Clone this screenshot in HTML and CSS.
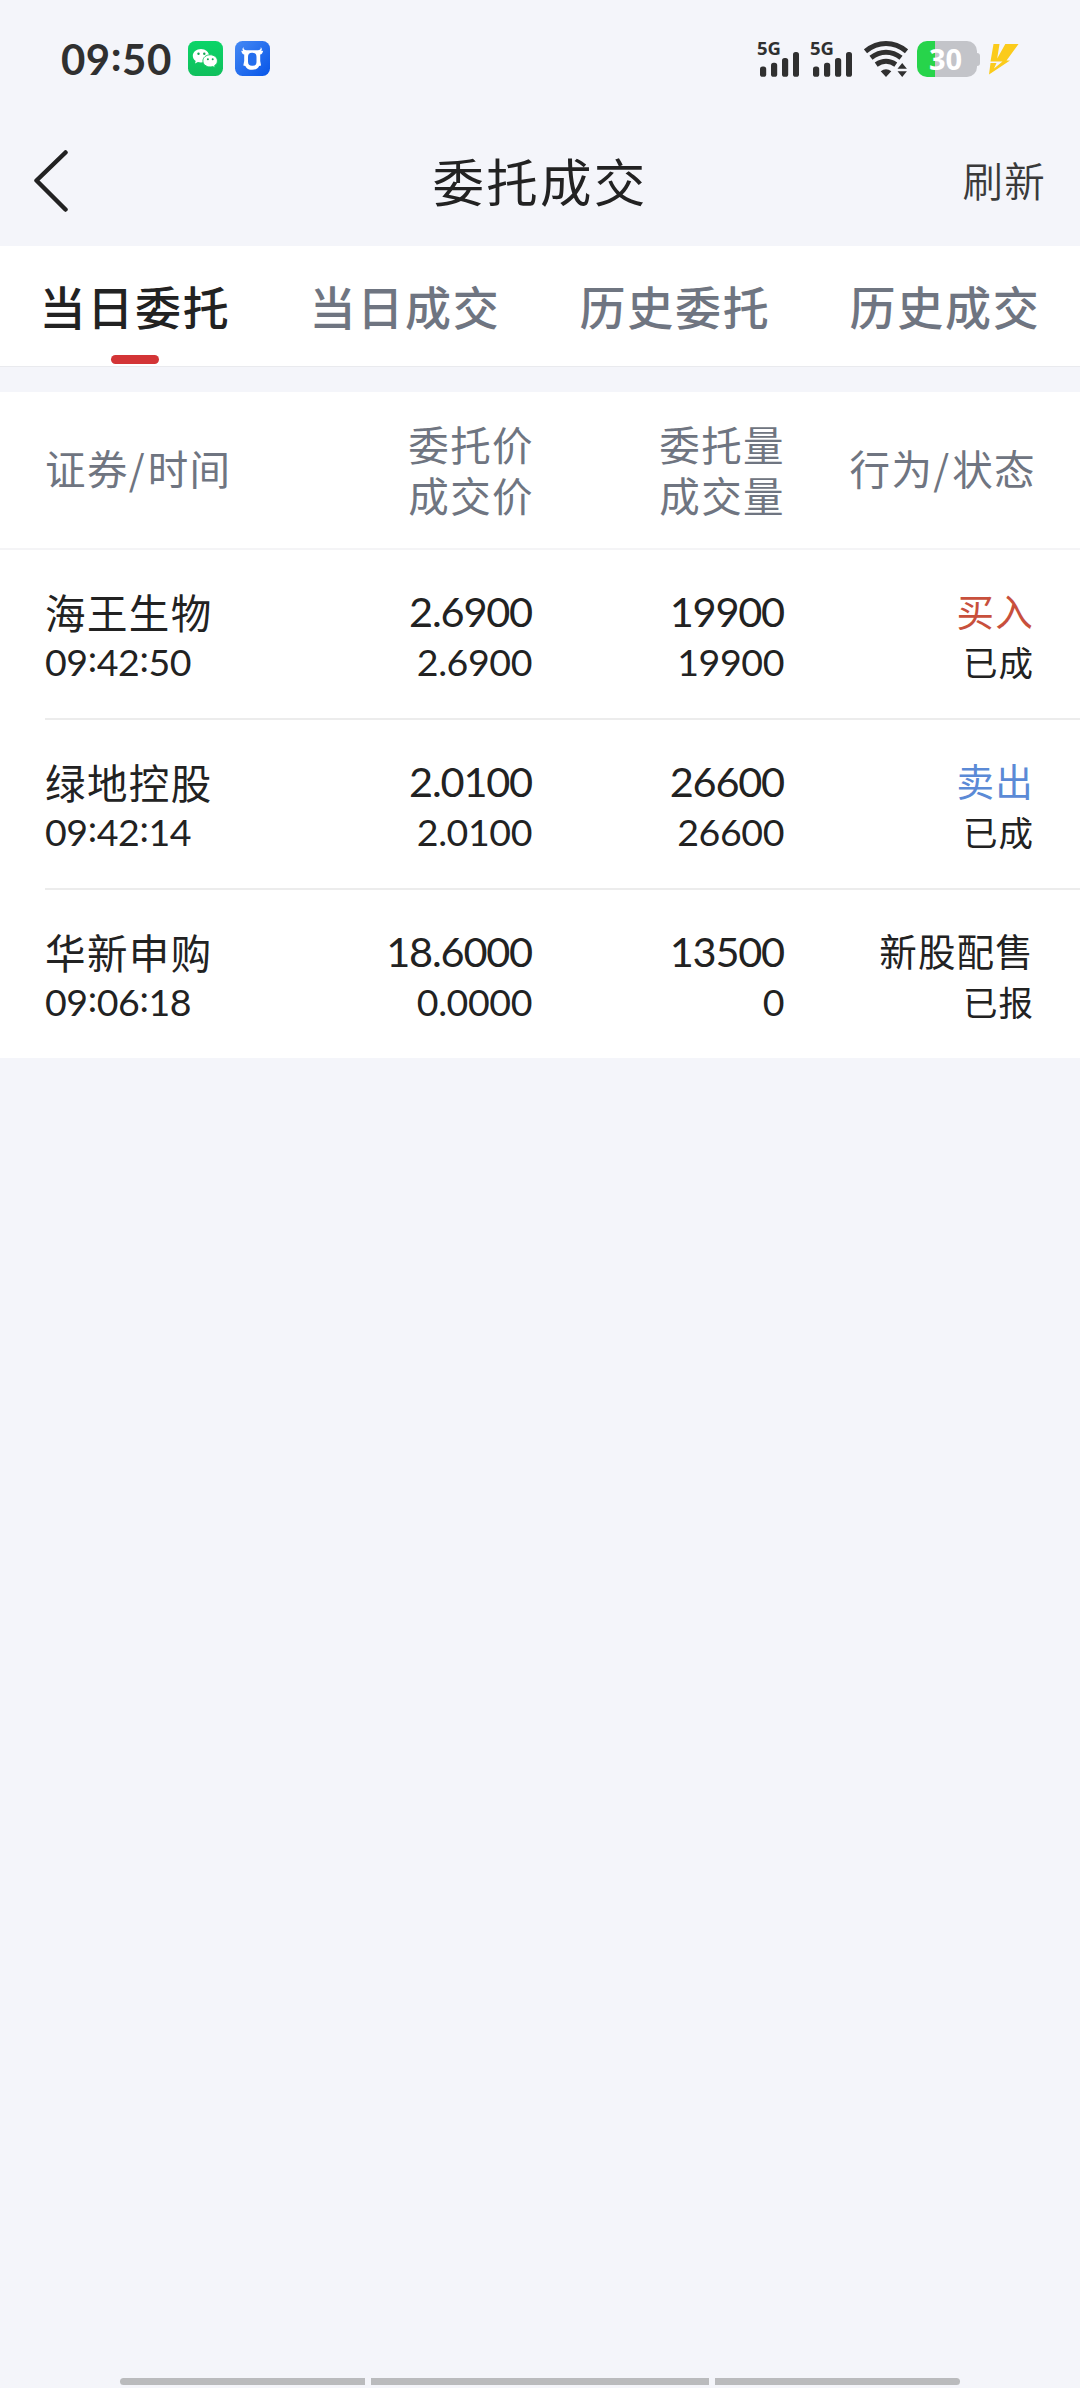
FILE: index.html
```html
<!DOCTYPE html>
<html lang="zh-CN">
<head>
<meta charset="utf-8">
<title>委托成交</title>
<link rel="stylesheet" href="styles.css">
</head>
<body>
<div class="screen">
  <div class="status">
    <div class="status-left">
      <span class="clock">09<span class="clock-colon">:</span>50</span>
      <svg class="app" viewBox="0 0 35 35">
        <defs><linearGradient id="g" x1="0" y1="0" x2="0" y2="1"><stop offset="0" stop-color="#0bd568"/><stop offset="1" stop-color="#10bf5c"/></linearGradient></defs>
        <rect width="35" height="35" rx="7.5" fill="url(#g)"/>
        <path d="M13 8c-4.600 0-8.200 3-8.200 6.800 0 2.100 1.100 3.900 2.900 5.200l-.7 2.400 2.900-1.400c1 .3 2 .5 3.100.5 4.500 0 8.100-3 8.100-6.700S17.500 8 13 8z" fill="#fff"/>
        <path d="M22.200 13.800c-4.100 0-7.300 2.700-7.300 6.100s3.200 6 7.300 6c.8 0 1.700-.1 2.500-.4l2.500 1.300-.6-2.200c1.700-1.100 2.800-2.800 2.800-4.700 0-3.400-3.200-6.100-7.200-6.100z" fill="#fff" stroke="#0ec860" stroke-width=".9"/>
        <g fill="#11a653"><circle cx="10.500" cy="12.700" r="1.200"/><circle cx="16.300" cy="12.700" r="1.200"/><circle cx="19.900" cy="18.200" r="1"/><circle cx="24.700" cy="18.200" r="1"/></g>
      </svg>
      <svg class="app" viewBox="0 0 35 35">
        <defs><linearGradient id="b" x1="0" y1="0" x2="1" y2="1"><stop offset="0" stop-color="#4589f4"/><stop offset="1" stop-color="#0755e8"/></linearGradient></defs>
        <rect width="35" height="35" rx="7.500" fill="url(#b)"/>
        <path d="M8.500 6c-.2 2.400.8 3.300 3 3.300h11.300c2.200 0 3.200-.9 3-3.300 1.300 1.400 1.300 2.800.5 4l1.900-.3c-.6 2.400-1.500 3.600-3 3.900V20l.9 4.500-2 .4c-1.200 2.600-3.500 3.900-6.900 3.900s-5.700-1.300-6.900-3.900l-2-.4.900-4.500v-6.400c-1.500-.3-2.400-1.500-3-3.900L8 10c-.8-1.200-.8-2.600.5-4z" fill="#fff"/>
        <rect x="13" y="11.800" width="8.500" height="13" rx="4" fill="#246eed"/>
      </svg>
    </div>
    <div class="status-right">
      <div class="signal">
        <span class="net">5G</span>
        <svg width="41" height="26" viewBox="0 0 41 26" fill="#303030"><rect x="2" y="15.500" width="6.200" height="10.300" rx="2.600"/><rect x="13" y="11.800" width="6.200" height="14" rx="2.600"/><rect x="24" y="7" width="6.200" height="18.800" rx="2.600"/><rect x="35" y="1" width="6" height="24.800" rx="2.600"/></svg>
      </div>
      <div class="signal">
        <span class="net">5G</span>
        <svg width="41" height="26" viewBox="0 0 41 26" fill="#303030"><rect x="2" y="15.500" width="6.200" height="10.300" rx="2.600"/><rect x="13" y="11.800" width="6.200" height="14" rx="2.600"/><rect x="24" y="7" width="6.200" height="18.800" rx="2.600"/><rect x="35" y="1" width="6" height="24.800" rx="2.600"/></svg>
      </div>
      <svg class="wifi" width="44" height="36" viewBox="0 0 44 36">
        <g fill="none" stroke="#303030" stroke-width="5"><path d="M1.500 10.300Q11 2.600 22 2.600T42.500 10.300"/><path d="M7 16.800Q14 11.300 22 11.300T37 16.800"/><path d="M12.200 23.600Q17 20.300 22 20.300T31.800 23.600"/></g>
        <path d="M22 36l-5.300-5.700Q22 26.300 27.300 30.300zM38.200 22l4.700 5.700h-9.400zM38.200 36l-4.700-5.800h9.400z" fill="#303030"/>
      </svg>
      <div class="battery"><div class="battery-body">30</div><div class="battery-tip"></div></div>
      <svg width="30" height="31" viewBox="0 0 30 31"><path d="M4.500 0H10.500L8.200 14.500 16.300 0H29.500L17.500 16.500H21L0 30.500 1.500 19H7.500L5 24.500 13.500 17.500H1.500z" fill="#fbcb1b"/></svg>
    </div>
  </div>

  <header class="nav">
    <svg class="back" width="34" height="62" viewBox="0 0 34 62"><path d="M31.500 2.500L2.500 30.500L31.500 59.500" fill="none" stroke="#222" stroke-width="4.500" stroke-linecap="round" stroke-linejoin="round"/></svg>
    <h1 class="title">委托成交</h1>
    <span class="refresh">刷新</span>
  </header>

  <nav class="tabs">
    <div class="tab active">当日委托</div>
    <div class="tab">当日成交</div>
    <div class="tab">历史委托</div>
    <div class="tab">历史成交</div>
  </nav>

  <section class="table">
    <div class="grid head">
      <div class="single">证券<span class="slash">/</span>时间</div>
      <div>委托价<br>成交价</div>
      <div>委托量<br>成交量</div>
      <div class="single">行为<span class="slash">/</span>状态</div>
    </div>
    <div class="grid row">
      <div><p class="name">海王生物</p><p class="num small">09<i>:</i>42<i>:</i>50</p></div>
      <div><p class="num">2.6900</p><p class="num small">2.6900</p></div>
      <div><p class="num">19900</p><p class="num small">19900</p></div>
      <div><p class="action buy">买入</p><p class="state">已成</p></div>
    </div>
    <div class="grid row">
      <div><p class="name">绿地控股</p><p class="num small">09<i>:</i>42<i>:</i>14</p></div>
      <div><p class="num">2.0100</p><p class="num small">2.0100</p></div>
      <div><p class="num">26600</p><p class="num small">26600</p></div>
      <div><p class="action sell">卖出</p><p class="state">已成</p></div>
    </div>
    <div class="grid row last">
      <div><p class="name">华新申购</p><p class="num small">09<i>:</i>06<i>:</i>18</p></div>
      <div><p class="num">18.6000</p><p class="num small">0.0000</p></div>
      <div><p class="num">13500</p><p class="num small">0</p></div>
      <div><p class="action">新股配售</p><p class="state">已报</p></div>
    </div>
  </section>

  <footer class="gesture"><span class="side left"></span><span class="mid"></span><span class="side right"></span></footer>
</div>
</body>
</html>
```
FILE: styles.css
```css
* { box-sizing: border-box; margin: 0; padding: 0; }
body { background: #f4f5fa; font-family: "Noto Sans CJK SC", sans-serif; color: #222; }
.screen { width: 1080px; height: 2388px; display: flex; flex-direction: column; overflow: hidden; }
svg { display: block; flex: none; }

.status { height: 120px; padding: 41px 61px 43px 61px; display: flex; justify-content: space-between; align-items: flex-start; }
.status-left { display: flex; gap: 12px; height: 36px; }
.clock { width: 115px; font: 700 42px/36px Lato, sans-serif; letter-spacing: .5px; color: #303030; white-space: nowrap; }
.clock-colon { vertical-align: 4px; line-height: 0; }
.app { width: 35px; height: 35px; }
.status-right { display: flex; height: 36px; }
.signal { width: 53px; height: 36px; display: flex; flex-direction: column; justify-content: space-between; }
.net { font: 700 18.500px/13px "Noto Sans", sans-serif; margin-left: -1px; height: 10px; color: #303030; }
.wifi { margin-right: 9px; }
.battery { display: flex; align-items: center; height: 36px; margin-right: 9px; }
.battery-body { width: 60px; height: 36px; border-radius: 10px; background: linear-gradient(90deg, #27d44b 18px, #c3c4c9 18px); color: #fff; font: 700 29px/36px "Noto Sans", sans-serif; text-align: center; padding-right: 3px; }
.battery-tip { width: 3px; height: 13px; border-radius: 0 3px 3px 0; background: #c3c4c9; }
.status-right > svg:last-child { margin-top: 3px; }

.nav { height: 126px; padding: 0 34px 0 34px; display: grid; grid-template-columns: 200px 1fr 200px; align-items: center; padding-bottom: 6px; }
.back { margin-top: 1px; }
.title { font-size: 51.500px; font-weight: 400; letter-spacing: 2.200px; text-align: center; line-height: 76px; }
.refresh { font-size: 40.500px; font-weight: 350; letter-spacing: 1.3px; text-align: right; color: #3a3a3a; line-height: 60px; }

.tabs { height: 121px; background: #fff; display: grid; grid-template-columns: repeat(4, 1fr); border-bottom: 1px solid #e9eaee; }
.tab { display: flex; flex-direction: column; align-items: center; height: 120px; padding-top: 25px; font-size: 46px; font-weight: 500; letter-spacing: 1.8px; line-height: 68px; color: #6f7581; white-space: nowrap; }
.active { color: #222; }
.active::after { content: ""; width: 48px; height: 9px; margin-top: 16px; border-radius: 5px; background: #d33436; }

.table { margin-top: 25px; background: #fff; }
.grid { display: grid; grid-template-columns: 200px 288px 252px 249px; white-space: nowrap; text-align: right; }
.grid > div:first-child { text-align: left; }
.head { height: 158px; grid-template-columns: 200px 289px 251px 251px; padding: 0 0 2px 45px; align-content: center; align-items: center; border-bottom: 2px solid #f4f4f6; font-size: 40.500px; letter-spacing: 1.400px; line-height: 51px; color: #6f7581; }
.single { padding-bottom: 3px; }
.slash { letter-spacing: 3px; }
.row { height: 170px; margin-left: 45px; padding-top: 36px; border-bottom: 2px solid #ececec; }
.last { height: 168px; border-bottom: 0; }
.row p { height: 51px; line-height: 51px; }
.row .name { font-size: 40.500px; letter-spacing: 1.400px; }
.row .num { font-family: Lato, sans-serif; font-size: 41.500px; letter-spacing: -1.200px; padding-right: 1px; }
.row .small { font-size: 37.500px; letter-spacing: -.4px; line-height: 50px; }
.small i { font-style: normal; vertical-align: 4px; line-height: 0; }
.row .action { font-size: 37.500px; letter-spacing: 1.200px; line-height: 48px; }
.row .state { font-size: 34.500px; letter-spacing: 1px; line-height: 49px; }
.row .buy { color: #c8503c; }
.row .sell { color: #5b8ad6; }

.gesture { margin-top: auto; padding: 0 120px 3px; display: flex; gap: 6px; }
.gesture span { height: 7px; background: #babbbd; }
.mid { width: 338px; }
.side { flex: 1; }
.left { border-radius: 4px 0 0 4px; }
.right { border-radius: 0 4px 4px 0; }
```
